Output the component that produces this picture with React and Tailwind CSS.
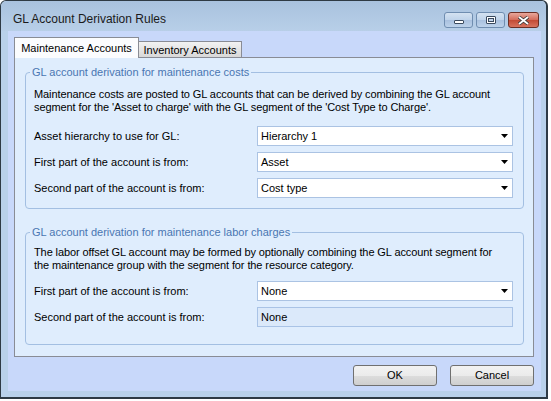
import React from "react";

const font = "font-['Liberation_Sans',Arial,sans-serif]";

function Arrow() {
  return (
    <svg width="7" height="4" viewBox="0 0 7 4">
      <path d="M0 0h7L3.5 4z" fill="#000" />
    </svg>
  );
}

function Select({ value }) {
  return (
    <div className="flex h-[20px] w-[256px] items-center justify-between border border-[#abc3e3] bg-white pl-[3px] pr-[4px]">
      <span>{value}</span>
      <Arrow />
    </div>
  );
}

function ReadOnly({ value }) {
  return (
    <div className="flex h-[20px] w-[256px] items-center border border-[#a9c3e6] bg-[#dbe9fa] pl-[3px]">
      <span>{value}</span>
    </div>
  );
}

function Row({ label, children }) {
  return (
    <div className="flex items-center justify-between">
      <span>{label}</span>
      {children}
    </div>
  );
}

function Group({ title, className, children }) {
  return (
    <fieldset className={`rounded-[4px] border border-[#a3bfe2] pl-[8px] pr-[10px] ${className}`}>
      <legend className="-ml-[4px] px-[2px] leading-[14px] text-[#4a76b2]">{title}</legend>
      {children}
    </fieldset>
  );
}

function CaptionButton({ kind }) {
  if (kind === "close") {
    return (
      <div className="flex h-[16px] w-[31px] items-center justify-center rounded-[3px] border border-[#6b2e25] bg-[linear-gradient(#e8a79b,#d36b59_50%,#c24a35_51%,#d8735f)]">
        <svg width="11" height="9" viewBox="0 0 11 9">
          <path d="M1 1l9 7M10 1L1 8" stroke="#3a3a3a" strokeWidth="3.4" />
          <path d="M1 1l9 7M10 1L1 8" stroke="#fff" strokeWidth="1.8" />
        </svg>
      </div>
    );
  }
  return (
    <div className="flex h-[16px] w-[29px] items-center justify-center rounded-[3px] border border-[#6f8db0] bg-[linear-gradient(#d4e2f1,#bfd3ea_50%,#a9c1df_51%,#bcd2ea)]">
      {kind === "min" ? (
        <div className="mt-[4px] h-[4px] w-[10px] rounded-[1px] border border-[#3a4a5e] bg-white" />
      ) : (
        <div className="flex h-[8px] w-[10px] items-center justify-center rounded-[1px] border border-[#3a4a5e] bg-white">
          <div className="h-[4px] w-[6px] border border-[#3a4a5e] bg-[#c0d3ea]" />
        </div>
      )}
    </div>
  );
}

function Button({ children }) {
  return (
    <div className="flex h-[21px] w-[84px] items-center justify-center rounded-[3px] border border-[#707070] bg-[linear-gradient(#f2f2f2,#ebebeb_50%,#dddddd_51%,#cfcfcf)] text-black">
      {children}
    </div>
  );
}

export default function App() {
  return (
    <div className={`${font} h-[401px] w-[551px] bg-white text-[11px] text-black`}>
      <div className="flex h-[399px] w-[548px] flex-col rounded-t-[6px] border-t border-l border-r-2 border-b-2 border-[#2e3a44] bg-[#b9d1ea]">
        {/* title bar */}
        <div className="flex h-[30px] shrink-0 items-start justify-between rounded-t-[6px] bg-[linear-gradient(#a9c2de,#b8cfe8)] pl-[12px] pr-[7px]">
          <span className="mt-[11px] text-[12px] leading-[15px] text-[#1a1a1a]">GL Account Derivation Rules</span>
          <div className="mt-[11px] flex gap-[3px]">
            <CaptionButton kind="min" />
            <CaptionButton kind="max" />
            <CaptionButton kind="close" />
          </div>
        </div>

        {/* client */}
        <div className="flex flex-1 px-[7px] pb-[6px]">
          <div className="flex flex-1 flex-col bg-[#c8d8fa] pl-[6px] pr-[7px] pt-[6px]">
            {/* tabs */}
            <div className="flex h-[20px] items-end">
              <div className="relative z-10 -mb-px flex h-[21px] w-[125px] items-start justify-center border border-b-0 border-[#898c95] bg-[#fbfcfe] pt-[3px] leading-[14px]">
                Maintenance Accounts
              </div>
              <div className="flex h-[16px] w-[103px] items-start justify-center border border-b-0 border-l-0 border-[#898c95] bg-[linear-gradient(#f2f2f2,#d8d8d8)] pt-[1px] leading-[14px]">
                Inventory Accounts
              </div>
            </div>
            {/* panel */}
            <div className="flex h-[300px] w-[520px] flex-col border border-[#898c95] bg-[#dfedfd] pl-[10px] pr-[9px] pt-[7px]">
              <Group title="GL account derivation for maintenance costs" className="pb-[10px]">
                <p className="pt-[9px] leading-[13px] tracking-[-0.1px]">
                  Maintenance costs are posted to GL accounts that can be derived by combining the GL account
                  <br />
                  segment for the 'Asset to charge' with the GL segment of the 'Cost Type to Charge'.
                </p>
                <div className="mt-[12px] flex flex-col gap-[6px]">
                  <Row label="Asset hierarchy to use for GL:">
                    <Select value="Hierarchy 1" />
                  </Row>
                  <Row label="First part of the account is from:">
                    <Select value="Asset" />
                  </Row>
                  <Row label="Second part of the account is from:">
                    <Select value="Cost type" />
                  </Row>
                </div>
              </Group>
              <Group title="GL account derivation for maintenance labor charges" className="mt-[16px] pb-[17px]">
                <p className="pt-[7px] leading-[13px] tracking-[-0.1px]">
                  The labor offset GL account may be formed by optionally combining the GL account segment for
                  <br />
                  the maintenance group with the segment for the resource category.
                </p>
                <div className="mt-[9px] flex flex-col gap-[6px]">
                  <Row label="First part of the account is from:">
                    <Select value="None" />
                  </Row>
                  <Row label="Second part of the account is from:">
                    <ReadOnly value="None" />
                  </Row>
                </div>
              </Group>
            </div>
            {/* buttons */}
            <div className="mt-[8px] flex w-[520px] justify-end gap-[13px]">
              <Button>OK</Button>
              <Button>Cancel</Button>
            </div>
          </div>
        </div>
      </div>
    </div>
  );
}
